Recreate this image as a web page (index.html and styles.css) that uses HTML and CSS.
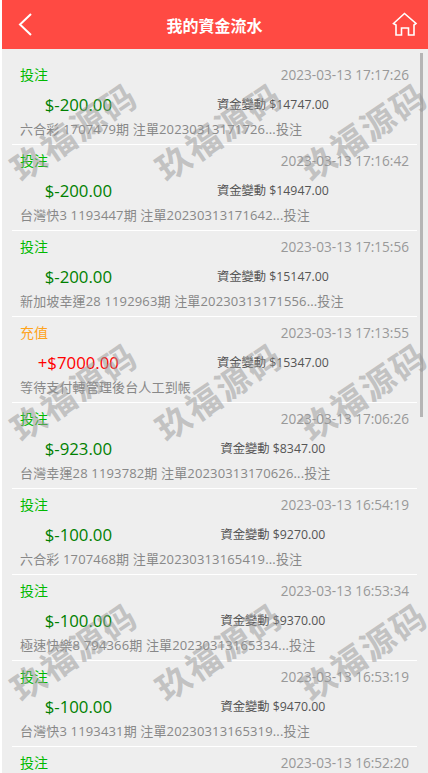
FILE: index.html
```html
<!DOCTYPE html>
<html lang="zh-Hant">
  <head>
    <meta charset="UTF-8" />
    <meta name="viewport" content="width=device-width, initial-scale=1.0" />
    <title>我的資金流水</title>
    <link rel="stylesheet" href="styles.css">
  </head>
  <body>
    <header class="topbar">
      <a class="topbar-btn" href="#">
        <svg width="18" height="24" viewBox="0 0 18 24"><path d="M17 1 L6 11.5 L17 22" fill="none" stroke="#fff" stroke-width="2"/></svg>
      </a>
      <h1 class="topbar-title">我的資金流水</h1>
      <a class="topbar-btn home" href="#">
        <svg width="26" height="26" viewBox="0 0 26 26"><path d="M12.5 1.5 L24 11.5 L22 13 V23 H16.5 V16 H9.5 V23 H4 V13 L1.5 11.5 Z" fill="none" stroke="#fff" stroke-width="1.6"/></svg>
      </a>
    </header>
    <main class="list">
      <div class="item">
        <div class="item-head"><span class="type bet">投注</span><span class="date">2023-03-13 17:17:26</span></div>
        <div class="item-mid"><span class="amount minus">$-200.00</span><span class="balance">資金變動 $14747.00</span></div>
        <p class="desc">六合彩 1707479期 注單20230313171726...投注</p>
      </div>
      <div class="item">
        <div class="item-head"><span class="type bet">投注</span><span class="date">2023-03-13 17:16:42</span></div>
        <div class="item-mid"><span class="amount minus">$-200.00</span><span class="balance">資金變動 $14947.00</span></div>
        <p class="desc">台灣快3 1193447期 注單20230313171642...投注</p>
      </div>
      <div class="item">
        <div class="item-head"><span class="type bet">投注</span><span class="date">2023-03-13 17:15:56</span></div>
        <div class="item-mid"><span class="amount minus">$-200.00</span><span class="balance">資金變動 $15147.00</span></div>
        <p class="desc">新加坡幸運28 1192963期 注單20230313171556...投注</p>
      </div>
      <div class="item">
        <div class="item-head"><span class="type topup">充值</span><span class="date">2023-03-13 17:13:55</span></div>
        <div class="item-mid"><span class="amount plus">+$7000.00</span><span class="balance">資金變動 $15347.00</span></div>
        <p class="desc">等待支付轉管理後台人工到帳</p>
      </div>
      <div class="item">
        <div class="item-head"><span class="type bet">投注</span><span class="date">2023-03-13 17:06:26</span></div>
        <div class="item-mid"><span class="amount minus">$-923.00</span><span class="balance">資金變動 $8347.00</span></div>
        <p class="desc">台灣幸運28 1193782期 注單20230313170626...投注</p>
      </div>
      <div class="item">
        <div class="item-head"><span class="type bet">投注</span><span class="date">2023-03-13 16:54:19</span></div>
        <div class="item-mid"><span class="amount minus">$-100.00</span><span class="balance">資金變動 $9270.00</span></div>
        <p class="desc">六合彩 1707468期 注單20230313165419...投注</p>
      </div>
      <div class="item">
        <div class="item-head"><span class="type bet">投注</span><span class="date">2023-03-13 16:53:34</span></div>
        <div class="item-mid"><span class="amount minus">$-100.00</span><span class="balance">資金變動 $9370.00</span></div>
        <p class="desc">極速快樂8 794366期 注單20230313165334...投注</p>
      </div>
      <div class="item">
        <div class="item-head"><span class="type bet">投注</span><span class="date">2023-03-13 16:53:19</span></div>
        <div class="item-mid"><span class="amount minus">$-100.00</span><span class="balance">資金變動 $9470.00</span></div>
        <p class="desc">台灣快3 1193431期 注單20230313165319...投注</p>
      </div>
      <div class="item last">
        <div class="item-head"><span class="type bet">投注</span><span class="date">2023-03-13 16:52:20</span></div>
      </div>
    </main>
    <div class="scroll-thumb"></div>
    <div class="watermarks">
      <span>玖福源码</span><span>玖福源码</span><span>玖福源码</span>
      <span>玖福源码</span><span>玖福源码</span><span>玖福源码</span>
      <span>玖福源码</span><span>玖福源码</span><span>玖福源码</span>
    </div>
  </body>
</html>
```

FILE: styles.css
```css
html {
  font-family: "Open Sans", "Noto Sans CJK TC", sans-serif;
}

body {
  margin: 0;
  height: 773px;
  overflow: hidden;
  background-color: #eee;
  border-left: 2px solid #fff;
  position: relative;
}

.topbar {
  height: 49px;
  background-color: #ff4a43;
  display: flex;
  align-items: center;
  justify-content: space-between;
  padding: 0 10px 0 12px;
}

.topbar-btn {
  display: flex;
  width: 30px;
}

.topbar-btn.home {
  width: 33px;
  justify-content: flex-end;
}

.topbar-title {
  margin: 0;
  font-size: 16px;
  font-weight: 700;
  color: #fff;
}

.list {
  padding: 10px 11px 0 10px;
}

.item {
  height: 85px;
  border-bottom: 1px solid #fff;
  padding: 0 8px;
}

.item.last {
  height: 30px;
  border-bottom: none;
}

.item-head {
  display: flex;
  justify-content: space-between;
  align-items: center;
  height: 30px;
}

.type {
  font-size: 14px;
}

.bet {
  color: #00b900;
}

.topup {
  color: #ffa31a;
}

.date {
  font-size: 13.6px;
  color: #999;
}

.item-mid {
  display: flex;
  align-items: center;
  height: 30px;
}

.amount {
  width: 30%;
  text-align: center;
  font-size: 16.8px;
}

.minus {
  color: #008000;
}

.plus {
  color: #f00;
}

.balance {
  width: 70%;
  text-align: center;
  font-size: 12.3px;
  color: #555;
}

.desc {
  margin: 0;
  font-size: 13px;
  line-height: 20px;
  letter-spacing: 0.15px;
  color: #888;
  white-space: nowrap;
}

.scroll-thumb {
  position: absolute;
  left: 418px;
  top: 53px;
  width: 3px;
  height: 364px;
  background-color: #b5b5b5;
}

.watermarks {
  position: absolute;
  left: -2px;
  top: 0;
  width: 435px;
  display: grid;
  grid-template-columns: repeat(3, 145px);
  grid-auto-rows: 260px;
  pointer-events: none;
}

.watermarks span {
  font-family: "Noto Sans CJK SC", sans-serif;
  font-size: 34px;
  font-weight: 700;
  letter-spacing: 2px;
  color: rgba(150, 150, 150, 0.5);
  white-space: nowrap;
  justify-self: center;
  align-self: center;
  transform: rotate(-34deg);
}
```
